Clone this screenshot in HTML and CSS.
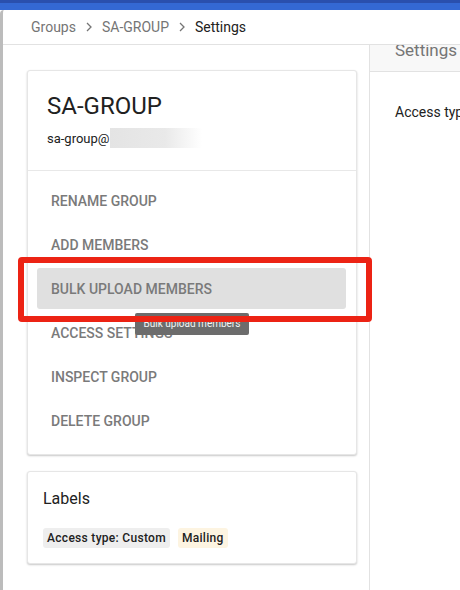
FILE: index.html
```
<!DOCTYPE html>
<html>
<head>
<meta charset="utf-8">
<link rel="stylesheet" href="styles.css">
</head>
<body>
<div class="topbar"></div>
<div class="frame">
  <nav class="crumbs">
    <span class="crumb">Groups</span>
    <svg class="chev" viewBox="0 0 6 10" width="6" height="10"><path d="M1 1l4 4-4 4" fill="none" stroke="#757575" stroke-width="1.3"/></svg>
    <span class="crumb">SA-GROUP</span>
    <svg class="chev" viewBox="0 0 6 10" width="6" height="10"><path d="M1 1l4 4-4 4" fill="none" stroke="#757575" stroke-width="1.3"/></svg>
    <span class="crumb current">Settings</span>
  </nav>
  <div class="content">
    <div class="left">
      <section class="card group-card">
        <header class="group-head">
          <h1 class="group-name">SA-GROUP</h1>
          <div class="email">sa-group@<span class="blur"></span></div>
        </header>
        <ul class="menu">
          <li class="item">RENAME GROUP</li>
          <li class="item">ADD MEMBERS</li>
          <li class="item active">BULK UPLOAD MEMBERS</li>
          <li class="item">ACCESS SETTINGS</li>
          <li class="item">INSPECT GROUP</li>
          <li class="item">DELETE GROUP</li>
        </ul>
      </section>
      <section class="card labels-card">
        <h2 class="labels-title">Labels</h2>
        <div class="chips">
          <span class="chip chip-grey">Access type: Custom</span>
          <span class="chip chip-amber">Mailing</span>
        </div>
      </section>
    </div>
    <aside class="right">
      <div class="right-head"><span class="right-title">Settings</span></div>
      <div class="right-body">Access type</div>
    </aside>
  </div>
  <div class="tooltip">Bulk upload members</div>
  <div class="callout"></div>
</div>
</body>
</html>
```
FILE: styles.css
```
html, body {
  margin: 0;
  padding: 0;
  width: 460px;
  height: 590px;
  overflow: hidden;
  background: #fff;
  font-family: Roboto, "Liberation Sans", Arial, sans-serif;
}
.topbar {
  height: 10px;
  background: linear-gradient(#2a4fae 0, #2a4fae 3px, #3468d4 3px);
}
.frame {
  position: relative;
  border-left: 3px solid #bcbcbc;
  border-top-left-radius: 4px;
  height: 580px;
  box-sizing: border-box;
}
.crumbs {
  height: 34px;
  border-bottom: 1px solid #e2e2e2;
  display: flex;
  align-items: center;
  padding-left: 28px;
  font-size: 14px;
  color: #757575;
}
.crumb { line-height: 20px; }
.crumb.current { color: #212121; }
.chev { margin: 0 10px 0 10px; }
.content {
  display: flex;
  height: 545px;
}
.left {
  flex: 0 0 366px;
  width: 366px;
  padding: 25px 0 0 24px;
  box-sizing: border-box;
}
.card {
  width: 330px;
  box-sizing: border-box;
  border: 1px solid #e6e6e6;
  border-radius: 3px;
  background: #fff;
  box-shadow: 0 1px 2px rgba(0,0,0,0.22);
}
.group-head {
  padding: 21px 19px 22px 19px;
  border-bottom: 1px solid #e8e8e8;
}
.group-name {
  margin: 0;
  font-size: 24px;
  font-weight: 400;
  line-height: 28px;
  color: #212121;
}
.email {
  margin-top: 8px;
  display: flex;
  align-items: center;
  height: 20px;
  font-size: 13px;
  color: #212121;
}
.blur {
  display: inline-block;
  width: 92px;
  height: 20px;
  background: linear-gradient(90deg, #e4e4e4 0%, #e9e9e9 60%, #ffffff 100%);
}
.menu {
  list-style: none;
  margin: 0;
  padding: 9px 10px 13px 9px;
  display: flex;
  flex-direction: column;
  gap: 3px;
}
.item {
  height: 41px;
  display: flex;
  align-items: center;
  padding-left: 14px;
  font-size: 14px;
  font-weight: 500;
  color: #7a7a7a;
  border-radius: 3px;
}
.item.active { background: #e0e0e0; }
.labels-card {
  margin-top: 16px;
  padding: 15px 16px 15px 15px;
}
.labels-title {
  margin: 0;
  font-size: 16px;
  font-weight: 400;
  line-height: 24px;
  color: #212121;
}
.chips {
  margin-top: 17px;
  display: flex;
  gap: 8px;
}
.chip {
  height: 20px;
  line-height: 20px;
  padding: 0 4px;
  border-radius: 3px;
  font-size: 12px;
  font-weight: 500;
  letter-spacing: 0.3px;
  color: #212121;
}
.chip-grey { background: #eeeeee; }
.chip-amber { background: #fdf4e1; }
.right {
  flex: 1 1 auto;
  min-width: 0;
  border-left: 1px solid #e2e2e2;
}
.right-head {
  height: 26px;
  border-bottom: 1px solid #e2e2e2;
  background: #f8f8f8;
  overflow: hidden;
  padding-left: 25px;
}
.right-title {
  display: block;
  margin-top: -8px;
  line-height: 26px;
  font-size: 17px;
  color: #757575;
  white-space: nowrap;
}
.right-body {
  padding: 30px 0 0 25px;
  font-size: 14px;
  line-height: 20px;
  color: #212121;
  white-space: nowrap;
  overflow: hidden;
}
.tooltip {
  position: absolute;
  left: 132px;
  top: 303px;
  width: 114px;
  height: 22px;
  box-sizing: border-box;
  background: #6c6c6c;
  color: #f4f4f4;
  font-size: 10px;
  line-height: 22px;
  text-align: center;
  border-radius: 2px;
}
.callout {
  position: absolute;
  left: 15px;
  top: 247px;
  width: 354px;
  height: 65px;
  box-sizing: border-box;
  border: 6px solid #ec2314;
  border-radius: 4px;
}
```
